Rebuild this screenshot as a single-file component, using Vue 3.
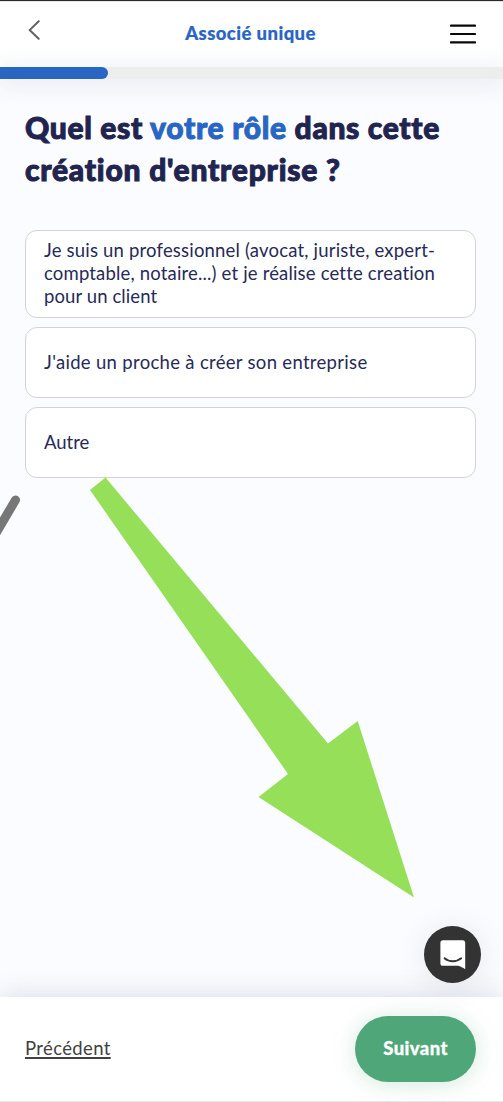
<script setup>
const options = [
  { id: 'pro', lines: ['Je suis un professionnel (avocat, juriste, expert-', 'comptable, notaire...) et je réalise cette creation', 'pour un client'] },
  { id: 'aide', lines: ["J'aide un proche à créer son entreprise"] },
  { id: 'autre', lines: ['Autre'] },
]
const progress = 21.5
</script>

<template>
  <div class="screen">
    <header class="header">
      <svg class="back" viewBox="0 0 12 20" width="12" height="20"><path d="M10.7 1.3 1.6 10.1 10.7 18.7" /></svg>
      <span class="header-title">Associé unique</span>
      <svg class="menu" viewBox="0 0 26 20" width="26" height="20"><path d="M1 1.6H25M1 10H25M1 18.4H25" /></svg>
    </header>
    <div class="track"><div class="bar" :style="{ width: progress + '%' }"></div></div>

    <main class="content">
      <h1 class="question">
        <span class="q1">Quel est <em>votre rôle</em> dans cette</span>
        <span class="q2">création d'entreprise ?</span>
      </h1>
      <div class="options">
        <button v-for="o in options" :key="o.id" class="option" :class="o.id">
          <span v-for="(l, i) in o.lines" :key="i" class="line" :class="'l' + i">{{ l }}</span>
        </button>
      </div>
    </main>

    <footer class="footer">
      <a class="prev">Précédent</a>
      <button class="next">Suivant</button>
    </footer>

    <svg class="annotations" viewBox="0 0 503 1102" width="503" height="1102">
      <path class="stroke" d="M15.5 500-8 540" />
      <path class="arrow" d="M105.500 477.500 328 743.500 357.700 721 414 897.500 258.500 797 288 774 90 490Z" />
    </svg>
    <div class="chat">
      <svg viewBox="0 0 26 30" width="26" height="30">
        <path class="bubble" d="M3 .2H22.600A2.600 2.600 0 0 1 25.200 2.800V29.200C23 27.700 20.500 26.500 18 25.800H3A2.600 2.600 0 0 1 .4 23.200V2.800A2.600 2.600 0 0 1 3 .2Z" />
        <path class="smile" d="M4.500 18.300C9 22.200 16.600 22.200 21.200 18.300" />
      </svg>
    </div>
  </div>
</template>

<style>
body { margin: 0; }
</style>

<style scoped>
.screen {
  position: relative;
  display: flex;
  flex-direction: column;
  box-sizing: border-box;
  width: 503px;
  height: 1102px;
  overflow: hidden;
  background: #fbfcff;
  border-top: 1px solid #2b292b;
  font-family: Lato, "Open Sans", sans-serif;
  font-variant-ligatures: none;
  color: #21244f;
}
.header {
  box-sizing: border-box;
  flex: none;
  height: 66px;
  padding: 0 27px 2px 28px;
  display: flex;
  align-items: center;
  justify-content: space-between;
  background: #fff;
  border-top: 1px solid #e6e6e6;
}
.back { margin-bottom: 7px; }
.back path { fill: none; stroke: #606065; stroke-width: 2; stroke-linecap: round; stroke-linejoin: round; }
.menu path { fill: none; stroke: #080808; stroke-width: 2.200; stroke-linecap: round; }
.header-title { color: #2965c3; font-size: 18.5px; font-weight: 900; letter-spacing: .42px; -webkit-text-stroke: .2px currentColor; margin: 0 0 2px 11px; white-space: nowrap; }
.track { flex: none; height: 12px; background: #ededed; box-shadow: 0 3px 24px 2px rgba(40, 60, 100, .11); }
.bar { height: 12px; background: #2965c3; border-radius: 0 6px 6px 0; }
.content { flex: 1; padding: 27px 27px 0 25px; }
.question { margin: 0; font-size: 30px; line-height: 42px; font-weight: 900; -webkit-text-stroke: 1px currentColor; }
.question span { display: block; white-space: nowrap; }
.q1 { letter-spacing: .67px; }
.q2 { letter-spacing: .770px; }
.question em { font-style: normal; color: #2965c3; }
.options { display: flex; flex-direction: column; gap: 9px; margin-top: 40px; }
.option {
  box-sizing: border-box;
  display: flex;
  flex-direction: column;
  align-items: flex-start;
  justify-content: center;
  height: 71px;
  padding: 0 18px 1px;
  border: 1px solid #d2d3d5;
  border-radius: 12px;
  background: #fff;
  color: #272a58;
  font: 400 18.500px/23px Lato, "Open Sans", sans-serif;
  font-variant-ligatures: none;
  text-align: left;
}
.option.pro { height: 88px; padding-bottom: 2px; }
.line { white-space: nowrap; letter-spacing: .19px; }
.pro .l1 { letter-spacing: .17px; }
.pro .l2 { letter-spacing: .1px; }
.aide .line { letter-spacing: .31px; }
.autre .line { letter-spacing: 0; }
.footer {
  box-sizing: border-box;
  flex: none;
  height: 105px;
  padding: 0 27px 0 25px;
  display: flex;
  align-items: center;
  justify-content: space-between;
  background: #fff;
  border-bottom: 1px solid #e3eaf4;
  box-shadow: 0 -3px 24px rgba(40, 60, 100, .15);
}
.prev { color: #414141; font-size: 18.500px; letter-spacing: .36px; margin-bottom: 3px; text-decoration: underline; text-decoration-thickness: 1.500px; text-underline-offset: 2px; }
.next {
  width: 121px;
  height: 66px;
  padding: 0 0 3px;
  border: 0;
  border-radius: 33px;
  background: #4fa779;
  color: #fff;
  font: 900 18.500px Lato, "Open Sans", sans-serif;
  letter-spacing: .4px;
  -webkit-text-stroke: .3px currentColor;
  box-shadow: 0 2px 22px rgba(79, 167, 121, .25);
}
.annotations { position: absolute; left: 0; top: -1px; pointer-events: none; }
.stroke { fill: none; stroke: #777; stroke-width: 9; stroke-linecap: round; }
.arrow { fill: #95df59; }
.chat {
  position: absolute;
  left: 424px;
  top: 925px;
  width: 57px;
  height: 57px;
  border-radius: 50%;
  background: #333;
  display: flex;
  align-items: center;
  justify-content: center;
  box-shadow: 0 2px 32px rgba(0, 0, 0, .09);
}
.bubble { fill: #fff; }
.smile { fill: none; stroke: #333; stroke-width: 1.800; stroke-linecap: round; }
</style>
